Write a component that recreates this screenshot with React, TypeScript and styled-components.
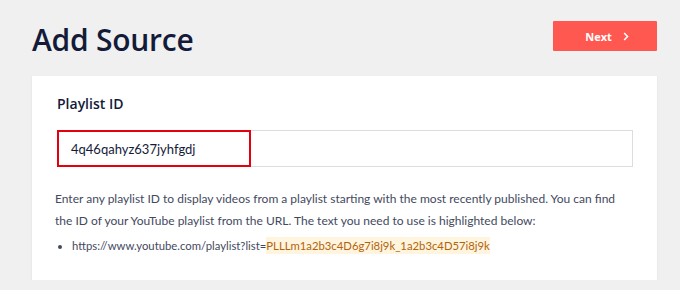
import React from 'react'
import styled, { createGlobalStyle } from 'styled-components'

const GlobalStyle = createGlobalStyle`
  body {
    margin: 0;
    background: #f0f0f1;
    font-family: Lato, 'Open Sans', sans-serif;
  }
`

const Page = styled.div`
  width: 625px;
  padding: 18px 0 0 32px;
`

const Header = styled.div`
  display: flex;
  justify-content: space-between;
  align-items: flex-start;
  height: 58px;
`

const Title = styled.h1`
  margin: 0;
  font-family: 'Open Sans', sans-serif;
  font-size: 30px;
  line-height: 44px;
  font-weight: 600;
  color: #141b38;
  letter-spacing: -0.25px;
`

const NextButton = styled.button`
  margin-top: 3px;
  width: 104px;
  height: 30px;
  display: flex;
  align-items: center;
  justify-content: center;
  gap: 11px;
  padding: 0 0 0 4px;
  border: none;
  border-radius: 1px;
  background: #ff5850;
  color: #fff;
  font-family: 'Open Sans', sans-serif;
  font-size: 11px;
  font-weight: 700;
  cursor: pointer;
`

const Card = styled.div`
  background: #fff;
  padding: 18px 24px 24px 25px;
  box-shadow: 0 1px 2px rgba(0, 0, 0, 0.08);
`

const Label = styled.div`
  font-family: 'Open Sans', sans-serif;
  font-size: 14px;
  line-height: 20px;
  font-weight: 600;
  color: #141b38;
  margin-bottom: 16px;
`

const Field = styled.div`
  position: relative;
  height: 37px;
  border: 1px solid #dcdce2;
  box-sizing: border-box;
  display: flex;
  align-items: center;
  padding-left: 13px;
  font-size: 13px;
  color: #141b38;
`

const Marker = styled.span`
  position: absolute;
  left: -1px;
  top: -1px;
  width: 194px;
  height: 37px;
  box-sizing: border-box;
  border: 2px solid #e3000f;
`

const Help = styled.p`
  margin: 21px 0 0 -2px;
  font-size: 12px;
  line-height: 22px;
  color: #434960;
  white-space: nowrap;
`

const List = styled.ul`
  margin: 4px 0 0;
  padding-left: 15px;
  font-size: 11.3px;
  line-height: 20px;
  color: #434960;
`

const Highlight = styled.span`
  background: #fff4de;
  color: #b2630a;
  font-size: 11.3px;
  padding: 2px 0;
`

const Chevron = () => (
  <svg width="6" height="9" viewBox="0 0 6 9" fill="none">
    <path d="M1.2 1l3.3 3.5-3.3 3.5" stroke="#fff" strokeWidth="1.6" />
  </svg>
)

export default function App() {
  return (
    <>
      <GlobalStyle />
      <Page>
        <Header>
          <Title>Add Source</Title>
          <NextButton>
            Next
            <Chevron />
          </NextButton>
        </Header>
        <Card>
          <Label>Playlist ID</Label>
          <Field>
            4q46qahyz637jyhfgdj
            <Marker />
          </Field>
          <Help>
            Enter any playlist ID to display videos from a playlist starting with the most recently published. You can find
            <br />
            the ID of your YouTube playlist from the URL. The text you need to use is highlighted below:
          </Help>
          <List>
            <li>
              https://www.youtube.com/playlist?list=
              <Highlight>PLLLm1a2b3c4D6g7i8j9k_1a2b3c4D57i8j9k</Highlight>
            </li>
          </List>
        </Card>
      </Page>
    </>
  )
}
